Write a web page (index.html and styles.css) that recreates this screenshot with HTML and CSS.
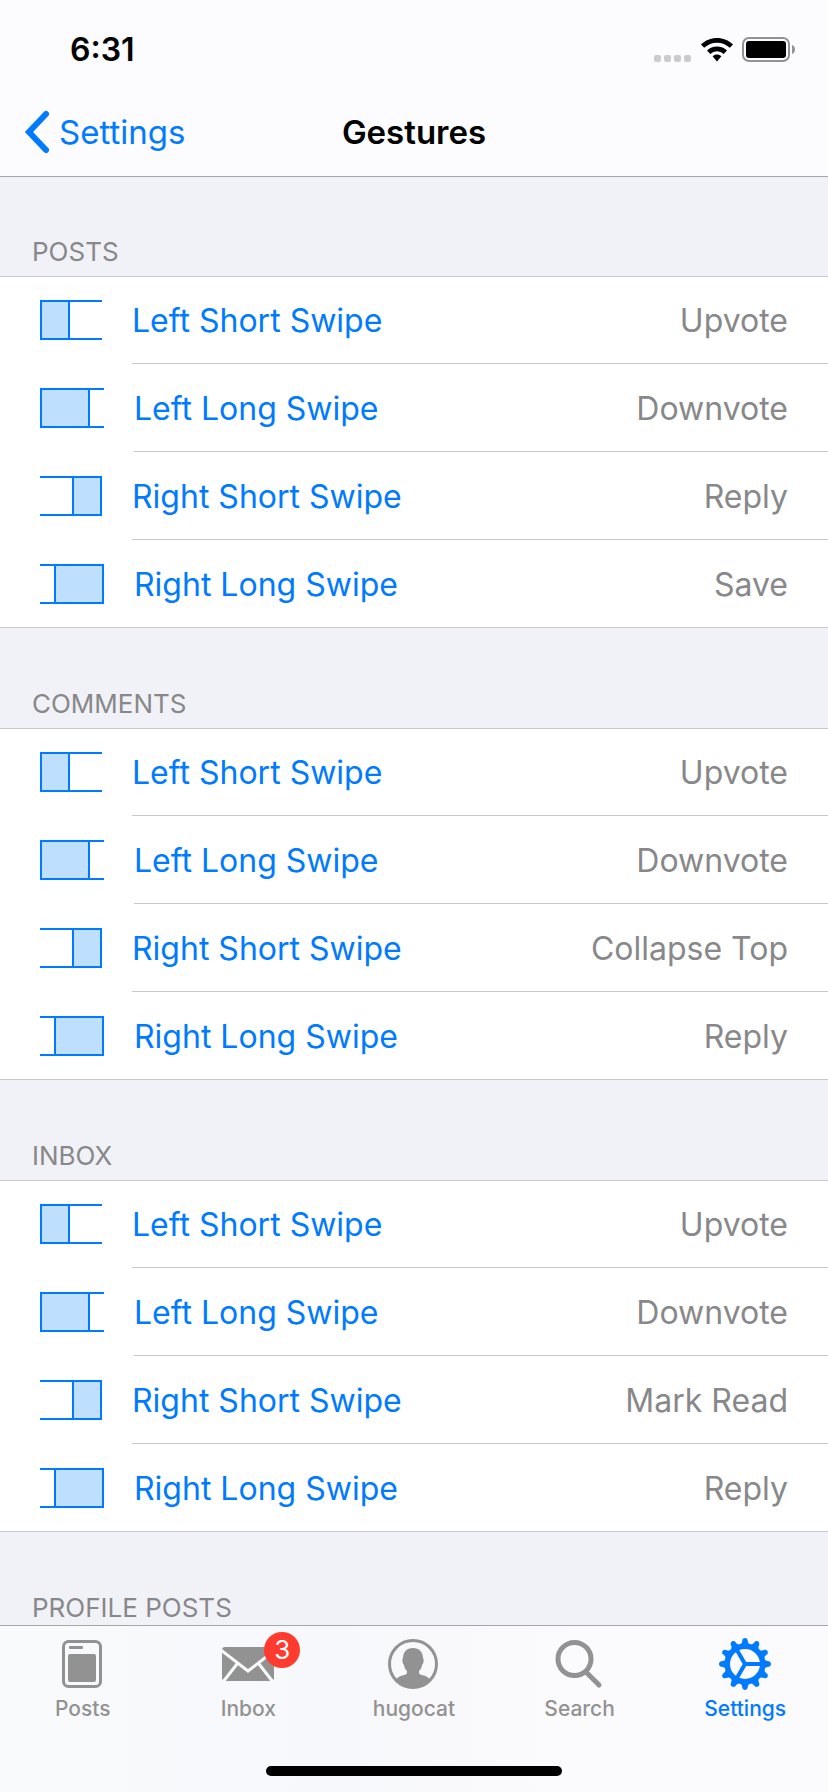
FILE: index.html
```html
<!DOCTYPE html>
<html lang="en">

<head>
  <meta charset="UTF-8" />
  <meta name="viewport" content="width=device-width, initial-scale=1.0" />
  <title>Gestures</title>
  <link rel="stylesheet" href="styles.css">
</head>

<body>
  <!-- swipe icons shared by every section -->
  <svg class="sprite" aria-hidden="true">
    <symbol id="left-short" viewBox="0 0 62 40">
      <rect class="fill" x="1" y="1" width="28" height="38" />
      <path d="M62 1H1V39H62M29 1V39" />
    </symbol>
    <symbol id="left-long" viewBox="0 0 64 40">
      <rect class="fill" x="1" y="1" width="48" height="38" />
      <path d="M64 1H1V39H64M49 1V39" />
    </symbol>
    <symbol id="right-short" viewBox="0 0 62 40">
      <rect class="fill" x="33" y="1" width="28" height="38" />
      <path d="M0 1H61V39H0M33 1V39" />
    </symbol>
    <symbol id="right-long" viewBox="0 0 64 40">
      <rect class="fill" x="15" y="1" width="48" height="38" />
      <path d="M0 1H63V39H0M15 1V39" />
    </symbol>
  </svg>

  <header class="top">
    <div class="status">
      <span class="time">6:31</span>
      <div class="indicators">
        <svg class="signal" width="38" height="24" viewBox="0 0 38 24">
          <rect x="0" y="17" width="7" height="7" rx="2" />
          <rect x="10" y="17" width="7" height="7" rx="2" />
          <rect x="20" y="17" width="7" height="7" rx="2" />
          <rect x="30" y="17" width="7" height="7" rx="2" />
        </svg>
        <svg class="wifi" width="32" height="24" viewBox="0 0 32 24">
          <path d="M16 0C10 0 4.300 2.300 0 6.400L3.200 9.800A18.500 18.500 0 0 1 28.800 9.800L32 6.400C27.700 2.300 22 0 16 0Z" />
          <path d="M16 8.500C12.200 8.500 8.600 10 6 12.600L9.300 16A9.600 9.600 0 0 1 22.700 16L26 12.600C23.400 10 19.800 8.500 16 8.500Z" />
          <path d="M16 16.600C14.400 16.600 12.900 17.200 11.600 18.300L16 23.400L20.400 18.300C19.100 17.200 17.600 16.600 16 16.600Z" />
        </svg>
        <svg class="battery" width="54" height="26" viewBox="0 0 54 26">
          <rect class="shell" x="1" y="1" width="46" height="23" rx="6" />
          <rect x="4" y="4" width="40" height="17" rx="3" />
          <path class="cap" d="M50 8C54 9 54 16 50 17Z" />
        </svg>
      </div>
    </div>
    <nav class="navbar">
      <a class="back" href="#settings">
        <svg width="26" height="44" viewBox="0 0 26 44">
          <path d="M22 4L5 22L22 40" />
        </svg>
        Settings
      </a>
      <h1>Gestures</h1>
    </nav>
  </header>

  <main>
    <section>
      <h2>POSTS</h2>
      <ul>
        <li><a href="#"><svg class="swipe short"><use href="#left-short" /></svg><span class="row"><span class="name">Left Short Swipe</span><span class="value">Upvote</span></span></a></li>
        <li><a href="#"><svg class="swipe long"><use href="#left-long" /></svg><span class="row"><span class="name">Left Long Swipe</span><span class="value">Downvote</span></span></a></li>
        <li><a href="#"><svg class="swipe short"><use href="#right-short" /></svg><span class="row"><span class="name">Right Short Swipe</span><span class="value">Reply</span></span></a></li>
        <li><a href="#"><svg class="swipe long"><use href="#right-long" /></svg><span class="row"><span class="name">Right Long Swipe</span><span class="value">Save</span></span></a></li>
      </ul>
    </section>

    <section>
      <h2>COMMENTS</h2>
      <ul>
        <li><a href="#"><svg class="swipe short"><use href="#left-short" /></svg><span class="row"><span class="name">Left Short Swipe</span><span class="value">Upvote</span></span></a></li>
        <li><a href="#"><svg class="swipe long"><use href="#left-long" /></svg><span class="row"><span class="name">Left Long Swipe</span><span class="value">Downvote</span></span></a></li>
        <li><a href="#"><svg class="swipe short"><use href="#right-short" /></svg><span class="row"><span class="name">Right Short Swipe</span><span class="value">Collapse Top</span></span></a></li>
        <li><a href="#"><svg class="swipe long"><use href="#right-long" /></svg><span class="row"><span class="name">Right Long Swipe</span><span class="value">Reply</span></span></a></li>
      </ul>
    </section>

    <section>
      <h2>INBOX</h2>
      <ul>
        <li><a href="#"><svg class="swipe short"><use href="#left-short" /></svg><span class="row"><span class="name">Left Short Swipe</span><span class="value">Upvote</span></span></a></li>
        <li><a href="#"><svg class="swipe long"><use href="#left-long" /></svg><span class="row"><span class="name">Left Long Swipe</span><span class="value">Downvote</span></span></a></li>
        <li><a href="#"><svg class="swipe short"><use href="#right-short" /></svg><span class="row"><span class="name">Right Short Swipe</span><span class="value">Mark Read</span></span></a></li>
        <li><a href="#"><svg class="swipe long"><use href="#right-long" /></svg><span class="row"><span class="name">Right Long Swipe</span><span class="value">Reply</span></span></a></li>
      </ul>
    </section>

    <section>
      <h2>PROFILE POSTS</h2>
    </section>
  </main>

  <footer class="bottom">
    <nav class="tabs">
      <a class="tab" href="#posts">
        <svg width="52" height="52" viewBox="0 0 52 52">
          <rect class="line" x="6.500" y="3.500" width="37" height="45" rx="5" stroke-width="3" />
          <rect x="12" y="8" width="14" height="3" rx="1" />
          <rect x="11" y="16" width="28" height="28" rx="2" />
        </svg>
        Posts
      </a>
      <a class="tab" href="#inbox">
        <span class="icon">
          <svg width="52" height="52" viewBox="0 0 52 52">
            <rect x="0" y="9" width="52" height="34" rx="3" />
            <path class="fold" d="M-1 12L26 33L53 12M1 44L15 26M51 44L37 26" />
          </svg>
          <span class="badge">3</span>
        </span>
        Inbox
      </a>
      <a class="tab" href="#profile">
        <svg width="52" height="52" viewBox="0 0 52 52">
          <circle class="line" cx="25" cy="26" r="23.500" stroke-width="3" />
          <path d="M25 10C19 10 15 14 15 20C14 21 14 25 16 27C16 29 17 31 19 33C19 36 19 36 16 37C12 38 9 39 8 43A24 24 0 0 0 42 43C41 39 38 38 34 37C31 36 31 36 31 33C33 31 34 29 34 27C36 25 36 21 35 20C35 14 31 10 25 10Z" />
        </svg>
        hugocat
      </a>
      <a class="tab" href="#search">
        <svg width="52" height="52" viewBox="0 0 52 52">
          <circle class="line" cx="20.500" cy="21" r="16.500" stroke-width="5" />
          <path class="line" d="M32 34L45 47" stroke-width="5" stroke-linecap="round" />
        </svg>
        Search
      </a>
      <a class="tab active" href="#settings">
        <svg width="52" height="52" viewBox="0 0 52 52">
          <circle class="line" cx="26" cy="26" r="17.700" stroke-width="5.400" />
          <path class="line" d="M26 26H43M26 26L17.500 11.300M26 26L17.500 40.700" stroke-width="4" />
          <g id="teeth">
            <path id="tooth" d="M20.500 7C22.500 6 23 4.500 23.300 2.500C23.600 -0.800 28.400 -0.800 28.700 2.500C29 4.500 29.500 6 31.500 7Z" />
            <use href="#tooth" transform="rotate(30 26 26)" />
            <use href="#tooth" transform="rotate(60 26 26)" />
          </g>
          <use href="#teeth" transform="rotate(90 26 26)" />
          <use href="#teeth" transform="rotate(180 26 26)" />
          <use href="#teeth" transform="rotate(270 26 26)" />
        </svg>
        Settings
      </a>
    </nav>
    <div class="home-bar"></div>
  </footer>
</body>

</html>
```
FILE: styles.css
```css
* {
  box-sizing: border-box;
  margin: 0;
  padding: 0;
}

body {
  display: flex;
  flex-direction: column;
  height: 100vh;
  overflow: hidden;
  background: #f1f2f7;
  font-family: Inter, "Liberation Sans", sans-serif;
  font-size: 32px;
  line-height: 40px;
}

a {
  color: #007aff;
  text-decoration: none;
}

svg {
  display: block;
  flex: none;
}

.sprite {
  position: absolute;
  width: 0;
  height: 0;
}

/* status bar and navigation bar */
.top {
  position: relative;
  flex: none;
  background: #fcfbfe;
  box-shadow: 0 1px 0 #a6a6ab;
}

.status {
  display: flex;
  align-items: center;
  justify-content: space-between;
  height: 88px;
  padding: 12px 32px 0 70px;
}

.time {
  font-weight: 600;
}

.indicators {
  display: flex;
  align-items: center;
  gap: 9px;
}

.signal {
  fill: #cbcbcd;
}

.battery .shell {
  fill: none;
  stroke: #929294;
  stroke-width: 2;
}

.battery .cap {
  fill: #929294;
}

.navbar {
  display: grid;
  grid-template-columns: 1fr auto 1fr;
  align-items: center;
  height: 88px;
  padding: 0 24px;
  font-size: 33px;
}

.back {
  display: flex;
  align-items: center;
  gap: 9px;
}

.back path {
  fill: none;
  stroke: #007aff;
  stroke-width: 6;
  stroke-linecap: round;
}

h1 {
  font-size: 33px;
  font-weight: 600;
}

/* settings list */
main {
  flex: 1;
  min-height: 0;
  overflow: hidden;
}

h2 {
  height: 100px;
  padding: 56px 32px 0;
  color: #88888a;
  font-size: 26px;
  font-weight: 400;
}

ul {
  background: #fff;
  border-bottom: 1px solid #c8c8cb;
  box-shadow: inset 0 1px 0 #c8c8cb;
  list-style: none;
}

li a {
  display: flex;
  align-items: center;
  gap: 30px;
  padding-left: 40px;
}

.swipe {
  height: 40px;
  fill: none;
  stroke: #007aff;
  stroke-width: 2;
}

.swipe.short {
  width: 62px;
}

.swipe.long {
  width: 64px;
}

.fill {
  fill: #bfdfff;
}

.row {
  display: flex;
  flex: 1;
  align-items: center;
  justify-content: space-between;
  height: 88px;
  padding: 2px 40px 0 0;
  border-bottom: 1px solid #c8c8cb;
}

li:last-child .row {
  height: 87px;
  border-bottom: none;
}

.value {
  color: #88888a;
}

/* tab bar */
.bottom {
  flex: none;
  padding-bottom: 16px;
  background: linear-gradient(90deg, #f8fafc, #f7f8fb 40%, #fbfafd 70%);
  border-top: 1px solid #a6a6ab;
}

.tabs {
  display: flex;
  height: 140px;
  padding-top: 12px;
}

.tab {
  display: flex;
  flex: 1;
  flex-direction: column;
  align-items: center;
  gap: 6px;
  color: #929292;
  font-size: 21px;
  font-weight: 500;
  line-height: 26px;
}

.tab svg {
  fill: currentColor;
}

.tab .line {
  fill: none;
  stroke: currentColor;
}

.tab .fold {
  fill: none;
  stroke: #f8fafc;
  stroke-width: 3;
}

.tab.active {
  color: #007aff;
}

.icon {
  position: relative;
}

.badge {
  position: absolute;
  top: -6px;
  right: -26px;
  width: 36px;
  height: 36px;
  border-radius: 50%;
  background: #ff3b30;
  color: #fff;
  font-size: 26px;
  font-weight: 400;
  line-height: 36px;
  text-align: center;
}

.home-bar {
  width: 296px;
  height: 10px;
  margin: 0 auto;
  border-radius: 5px;
  background: #000;
}
```
